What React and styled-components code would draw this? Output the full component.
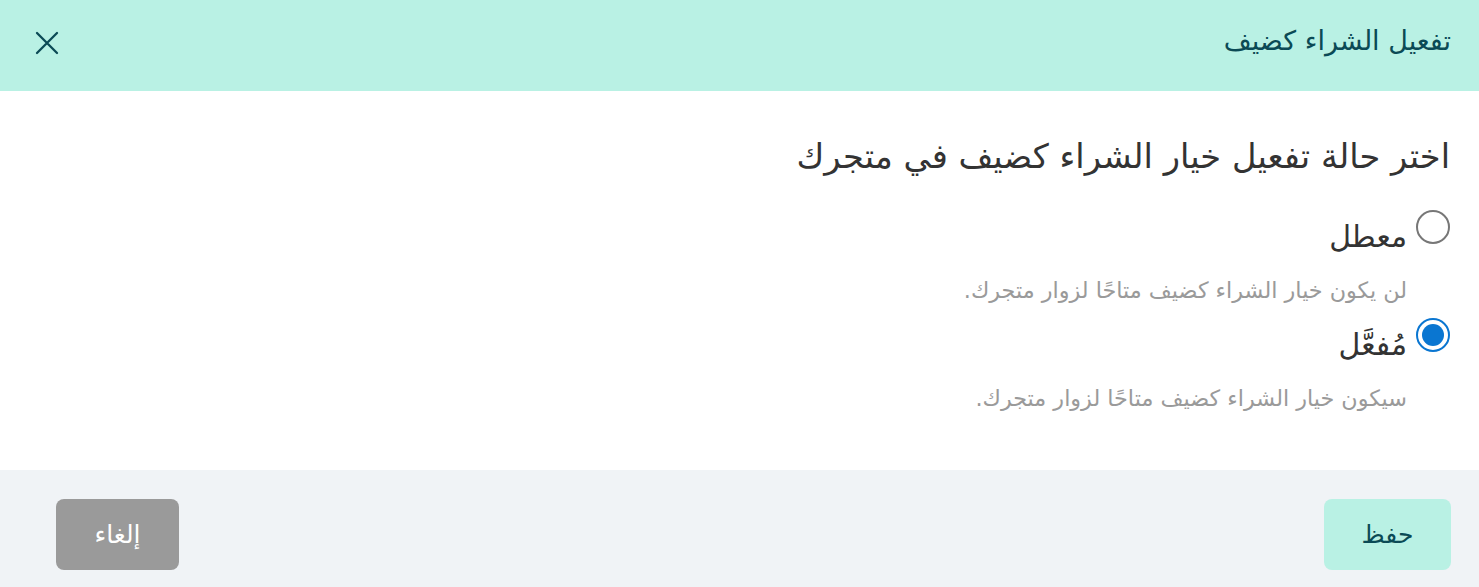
import React from "react";
import styled, { createGlobalStyle } from "styled-components";

const Global = createGlobalStyle`
  html, body { margin: 0; padding: 0; background: #fff; }
  body { font-family: "DejaVu Sans", sans-serif; }
  * { box-sizing: border-box; }
`;

const Dialog = styled.div`
  width: 1479px;
  height: 587px;
  display: flex;
  flex-direction: column;
  direction: rtl;
`;

const Header = styled.div`
  height: 91px;
  background: #b9f1e4;
  display: flex;
  align-items: center;
  justify-content: space-between;
  padding: 0 28px 0 32px;
`;

const Title = styled.h1`
  margin: -10px 0 0;
  font-size: 27px;
  line-height: 40px;
  font-weight: 400;
  color: #0b4a55;
`;

const Close = styled.button`
  border: 0;
  background: transparent;
  padding: 0;
  width: 30px;
  height: 30px;
  display: flex;
  align-items: center;
  justify-content: center;
  color: #0b4a55;
  margin-top: -6px;
`;

const Body = styled.div`
  flex: 1;
  padding: 40px 29px 0;
  display: flex;
  flex-direction: column;
`;

const Question = styled.h2`
  margin: 0 0 27px;
  font-size: 33.7px;
  line-height: 52px;
  font-weight: 400;
  color: #333;
`;

const Option = styled.label`
  display: flex;
  align-items: flex-start;
  gap: 9px;
`;

const Radio = styled.span`
  width: 34px;
  height: 34px;
  border-radius: 50%;
  border: 2px solid ${(p) => (p.$checked ? "#0a76d1" : "#777")};
  display: flex;
  align-items: center;
  justify-content: center;
  flex-shrink: 0;
  &::after {
    content: "";
    width: 22px;
    height: 22px;
    border-radius: 50%;
    background: ${(p) => (p.$checked ? "#0a76d1" : "transparent")};
  }
`;

const OptionText = styled.div`
  display: flex;
  flex-direction: column;
`;

const OptionLabel = styled.span`
  font-size: 30px;
  color: #333;
  line-height: 44px;
  padding-top: 5px;
`;

const OptionHint = styled.span`
  font-size: 22.3px;
  line-height: 30px;
  color: #9a9a9a;
  margin: 16px 0 13px;
`;

const Footer = styled.div`
  height: 117px;
  background: #f0f3f6;
  display: flex;
  align-items: center;
  justify-content: space-between;
  padding: 0 28px 0 56px;
`;

const Button = styled.button`
  border: 0;
  border-radius: 8px;
  height: 71px;
  width: ${(p) => p.$w}px;
  background: ${(p) => p.$bg};
  color: ${(p) => p.$color};
  font-family: inherit;
  font-size: 25px;
  margin-top: 11px;
`;

export default function App() {
  return (
    <>
      <Global />
      <Dialog>
        <Header>
          <Title>تفعيل الشراء كضيف</Title>
          <Close aria-label="close">
            <svg width="24" height="24" viewBox="0 0 24 24" fill="none" stroke="currentColor" strokeWidth="2.3" strokeLinecap="round">
              <path d="M2 2L22 22M22 2L2 22" />
            </svg>
          </Close>
        </Header>
        <Body>
          <Question>اختر حالة تفعيل خيار الشراء كضيف في متجرك</Question>
          <Option>
            <Radio />
            <OptionText>
              <OptionLabel>معطل</OptionLabel>
              <OptionHint>لن يكون خيار الشراء كضيف متاحًا لزوار متجرك.</OptionHint>
            </OptionText>
          </Option>
          <Option>
            <Radio $checked />
            <OptionText>
              <OptionLabel>مُفعَّل</OptionLabel>
              <OptionHint>سيكون خيار الشراء كضيف متاحًا لزوار متجرك.</OptionHint>
            </OptionText>
          </Option>
        </Body>
        <Footer>
          <Button $w={127} $bg="#b9f1e4" $color="#0b4a55">حفظ</Button>
          <Button $w={123} $bg="#9a9a9a" $color="#fff">إلغاء</Button>
        </Footer>
      </Dialog>
    </>
  );
}
